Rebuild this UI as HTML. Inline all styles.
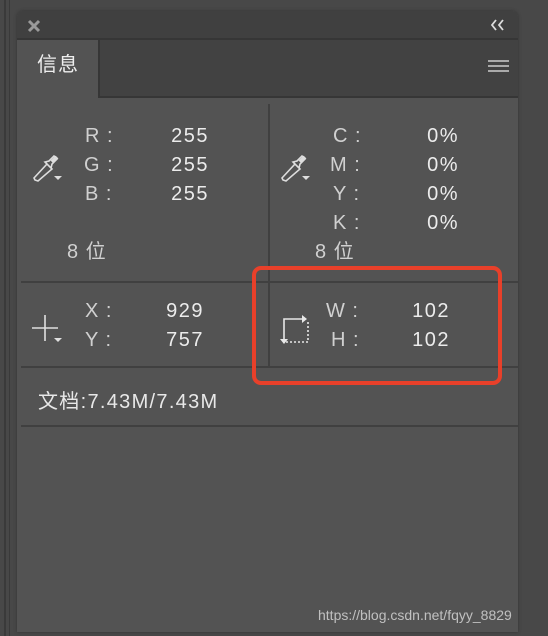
<!DOCTYPE html>
<html><head><meta charset="utf-8"><style>
body{margin:0;width:548px;height:636px;background:#484848;position:relative;overflow:hidden;font-family:"Liberation Sans","Noto Sans CJK SC",sans-serif;}
.a{position:absolute}
.t{position:absolute;font-size:20px;color:#d0d0d0;line-height:20px;white-space:nowrap;letter-spacing:1px}
.v{position:absolute;font-size:20px;color:#ececec;line-height:20px;text-align:right;width:80px;letter-spacing:1.5px}
</style></head><body>
<div class="a" style="left:4px;top:0;width:2px;height:636px;background:#3a3a3a"></div>
<div class="a" style="left:9px;top:0;width:1px;height:636px;background:#3a3a3a"></div>
<div class="a" style="left:17px;top:11px;width:501px;height:621px;background:#535353;border-radius:6px 6px 0 0;box-shadow:0 0 3px #333"></div>
<div class="a" style="left:17px;top:11px;width:501px;height:27px;background:#404040;border-radius:6px 6px 0 0;border-bottom:2px solid #363636"></div>
<div class="a" style="left:98px;top:40px;width:418px;height:56px;background:#424242;border-left:2px solid #363636;border-bottom:2px solid #363636"></div>
<svg class="a" style="left:27px;top:19px" width="14" height="14"><path d="M2 2L12 12M12 2L2 12" stroke="#9a9a9a" stroke-width="3"/></svg>
<svg class="a" style="left:490px;top:19px" width="16" height="12"><path d="M6 1L2 6L6 11M13 1L9 6L13 11" fill="none" stroke="#ddd" stroke-width="1.8"/></svg>
<div class="t" style="left:37px;top:55px;color:#eee">信息</div>
<svg class="a" style="left:488px;top:59px" width="21" height="16"><path d="M0 2H21M0 7H21M0 12H21" stroke="#aaa" stroke-width="2"/></svg>
<div class="a" style="left:268px;top:104px;width:2px;height:262px;background:#404040"></div>
<div class="a" style="left:21px;top:281px;width:497px;height:2px;background:#404040"></div>
<div class="a" style="left:21px;top:366px;width:497px;height:2px;background:#404040"></div>
<div class="a" style="left:21px;top:425px;width:497px;height:2px;background:#404040"></div>
<svg class="a" style="left:32px;top:152px" width="32" height="32"><path d="M3 28L2 26L15 12L20 17L6 29Z M15 12L13 10L17 9L22 4L25 7L20 12L19 16" fill="none" stroke="#ddd" stroke-width="1.6"/><path d="M20 10L25 5" stroke="#ddd" stroke-width="4"/><path d="M22 24H30L26 28Z" fill="#ddd"/></svg>
<svg class="a" style="left:280px;top:152px" width="32" height="32"><path d="M3 28L2 26L15 12L20 17L6 29Z M15 12L13 10L17 9L22 4L25 7L20 12L19 16" fill="none" stroke="#ddd" stroke-width="1.6"/><path d="M20 10L25 5" stroke="#ddd" stroke-width="4"/><path d="M22 24H30L26 28Z" fill="#ddd"/></svg>
<div class="t" style="left:85px;top:126px">R :</div><div class="v" style="left:129px;top:126px">255</div>
<div class="t" style="left:84px;top:155px">G :</div><div class="v" style="left:129px;top:155px">255</div>
<div class="t" style="left:85px;top:184px">B :</div><div class="v" style="left:129px;top:184px">255</div>
<div class="t" style="left:67px;top:242px">8 位</div>
<div class="t" style="left:333px;top:126px">C :</div><div class="v" style="left:379px;top:126px">0%</div>
<div class="t" style="left:330px;top:155px">M :</div><div class="v" style="left:379px;top:155px">0%</div>
<div class="t" style="left:333px;top:184px">Y :</div><div class="v" style="left:379px;top:184px">0%</div>
<div class="t" style="left:333px;top:213px">K :</div><div class="v" style="left:379px;top:213px">0%</div>
<div class="t" style="left:315px;top:242px">8 位</div>
<svg class="a" style="left:32px;top:315px" width="32" height="30"><path d="M13 0V26M0 13H26" stroke="#e0e0e0" stroke-width="1.6"/><path d="M22 23H30L26 27Z" fill="#e0e0e0"/></svg>
<div class="t" style="left:85px;top:301px">X :</div><div class="v" style="left:124px;top:301px">929</div>
<div class="t" style="left:85px;top:330px">Y :</div><div class="v" style="left:124px;top:330px">757</div>
<svg class="a" style="left:280px;top:314px" width="32" height="32"><path d="M4 26V5H22" fill="none" stroke="#e8e8e8" stroke-width="1.6"/><path d="M22 1L27 5L22 9Z M0 25H8L4 30Z" fill="#e8e8e8"/><path d="M6 28H28V7" fill="none" stroke="#e8e8e8" stroke-width="1.6" stroke-dasharray="2 2"/></svg>
<div class="t" style="left:326px;top:301px">W :</div><div class="v" style="left:370px;top:301px">102</div>
<div class="t" style="left:331px;top:330px">H :</div><div class="v" style="left:370px;top:330px">102</div>
<div class="a" style="left:252px;top:266px;width:242px;height:111px;border:4px solid #e8402a;border-radius:9px"></div>
<div class="t" style="left:38px;top:392px;color:#e8e8e8;letter-spacing:1.3px">文档:7.43M/7.43M</div>
<div class="a" style="left:318px;top:607px;font-size:14px;color:#c0c0c0">https://blog.csdn.net/fqyy_8829</div>
</body></html>
